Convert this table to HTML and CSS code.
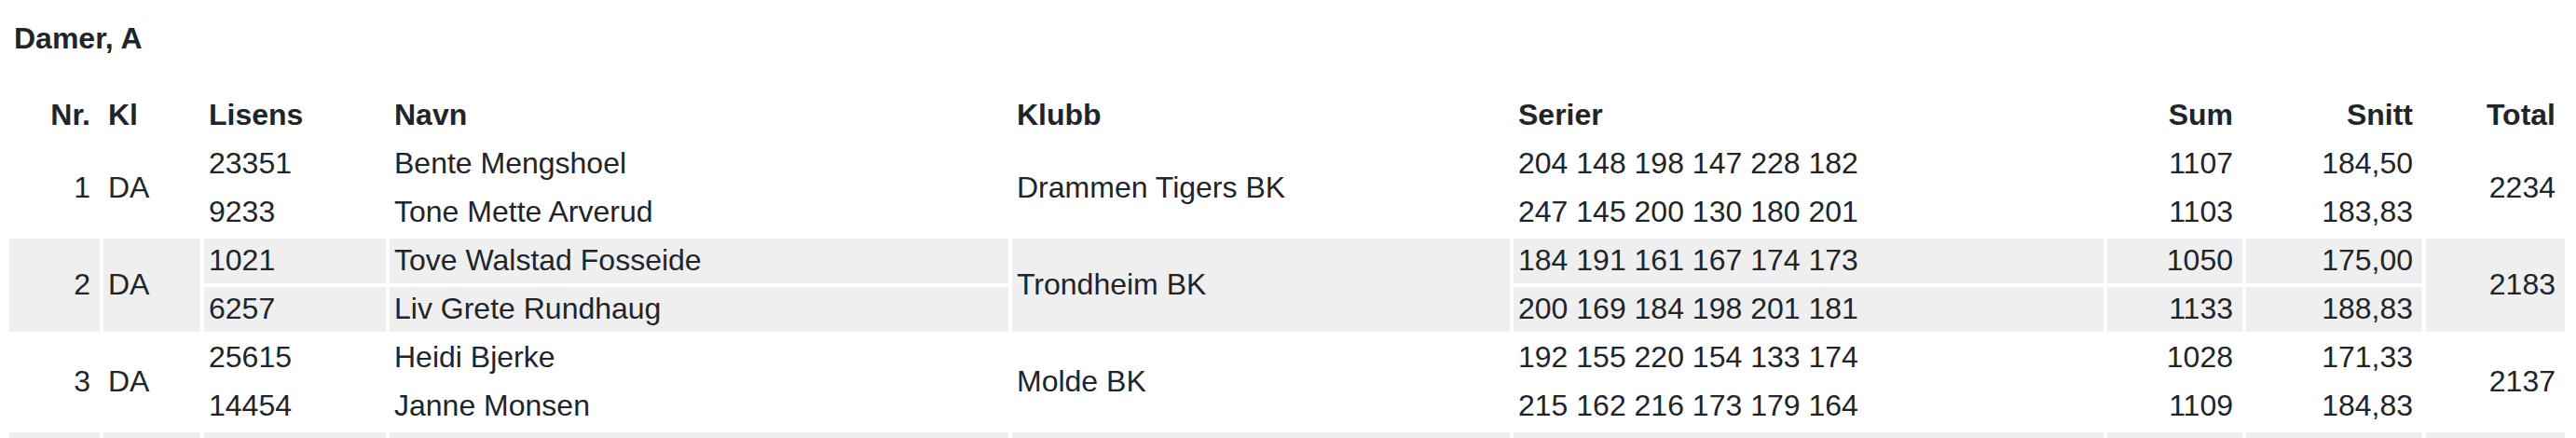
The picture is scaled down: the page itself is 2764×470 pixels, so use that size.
FILE: index.html
```html
<!DOCTYPE html>
<html lang="no">
<head>
<meta charset="utf-8">
<title>Damer, A</title>
<link rel="stylesheet" href="styles.css">
</head>
<body>
<div class="page">
  <h3 class="class-title">Damer, A</h3>
  <table class="results">
    <colgroup>
      <col class="c-nr"><col class="c-kl"><col class="c-lis"><col class="c-navn"><col class="c-klubb"><col class="c-serier"><col class="c-sum"><col class="c-snitt"><col class="c-total">
    </colgroup>
    <thead>
      <tr>
        <th class="num">Nr.</th><th>Kl</th><th>Lisens</th><th>Navn</th><th>Klubb</th><th>Serier</th><th class="num">Sum</th><th class="num">Snitt</th><th class="num">Total</th>
      </tr>
    </thead>
    <tbody class="team">
      <tr>
        <td class="num" rowspan="2">1</td><td rowspan="2">DA</td><td>23351</td><td>Bente Mengshoel</td><td rowspan="2">Drammen Tigers BK</td><td>204 148 198 147 228 182</td><td class="num">1107</td><td class="num">184,50</td><td class="num" rowspan="2">2234</td>
      </tr>
      <tr>
        <td>9233</td><td>Tone Mette Arverud</td><td>247 145 200 130 180 201</td><td class="num">1103</td><td class="num">183,83</td>
      </tr>
    </tbody>
    <tbody class="team alt">
      <tr>
        <td class="num" rowspan="2">2</td><td rowspan="2">DA</td><td>1021</td><td>Tove Walstad Fosseide</td><td rowspan="2">Trondheim BK</td><td>184 191 161 167 174 173</td><td class="num">1050</td><td class="num">175,00</td><td class="num" rowspan="2">2183</td>
      </tr>
      <tr>
        <td>6257</td><td>Liv Grete Rundhaug</td><td>200 169 184 198 201 181</td><td class="num">1133</td><td class="num">188,83</td>
      </tr>
    </tbody>
    <tbody class="team">
      <tr>
        <td class="num" rowspan="2">3</td><td rowspan="2">DA</td><td>25615</td><td>Heidi Bjerke</td><td rowspan="2">Molde BK</td><td>192 155 220 154 133 174</td><td class="num">1028</td><td class="num">171,33</td><td class="num" rowspan="2">2137</td>
      </tr>
      <tr>
        <td>14454</td><td>Janne Monsen</td><td>215 162 216 173 179 164</td><td class="num">1109</td><td class="num">184,83</td>
      </tr>
    </tbody>
    <tbody class="team alt">
      <tr>
        <td class="num" rowspan="2"></td><td rowspan="2"></td><td></td><td></td><td rowspan="2"></td><td></td><td class="num"></td><td class="num"></td><td class="num" rowspan="2"></td>
      </tr>
      <tr>
        <td></td><td></td><td></td><td class="num"></td><td class="num"></td>
      </tr>
    </tbody>
  </table>
</div>
</body>
</html>
```
FILE: styles.css
```css
html, body {
  margin: 0;
  padding: 0;
  background: #fff;
}
body {
  font-family: "Liberation Sans", Arial, Helvetica, sans-serif;
  font-size: 32px;
  line-height: 37px;
  color: #212529;
}
.page {
  padding: 23px 8px 0 6px;
}
.class-title {
  margin: 0 0 36px 0;
  padding-left: 9px;
  font-size: 32px;
  font-weight: 700;
  line-height: 37px;
}
.results {
  table-layout: fixed;
  width: 2750px;
  border-collapse: separate;
  border-spacing: 4px;
  margin: 0;
}
.c-nr { width: 97px; }
.c-kl { width: 104px; }
.c-lis { width: 195px; }
.c-navn { width: 664px; }
.c-klubb { width: 534px; }
.c-serier { width: 633px; }
.c-sum { width: 145px; }
.c-snitt { width: 189px; }
.c-total { width: 149px; }
.results th,
.results td {
  height: 48px;
  padding: 0 10px 2px 5px;
  text-align: left;
  vertical-align: middle;
  white-space: nowrap;
  box-sizing: border-box;
}
.results th {
  font-weight: 700;
}
.results .num {
  text-align: right;
}
.team.alt td {
  background: #efefef;
}
```
